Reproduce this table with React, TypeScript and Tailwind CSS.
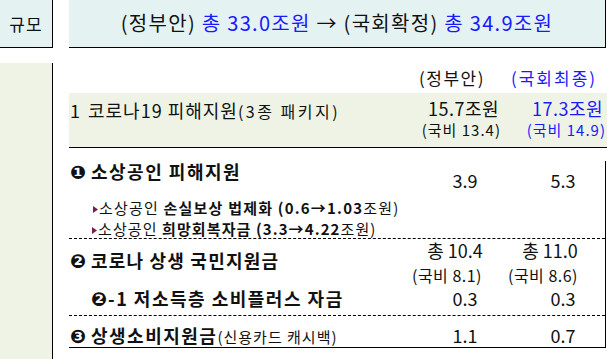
import React from "react";

const FONT = { fontFamily: '"Noto Sans CJK KR", "Noto Sans", sans-serif' };

function Bullet() {
  return (
    <svg width="5" height="7" viewBox="0 0 5 7" className="inline-block mr-[1px] align-[1px]">
      <polygon points="0,0 5,3.5 0,7" fill="#7a1f4a" />
    </svg>
  );
}

function Circ({ n, w = 21 }: { n: string; w?: number }) {
  return (
    <span
      className="inline-block text-[19px] leading-none align-[0px] tracking-normal"
      style={{ fontFamily: '"DejaVu Sans", sans-serif', width: w }}
    >
      {n}
    </span>
  );
}

export default function App() {
  return (
    <div className="w-[607px] h-[359px] bg-white text-[#111] overflow-hidden" style={FONT}>
      {/* top row */}
      <div className="flex h-[48px]">
        <div className="w-[53px] bg-[#e4f2f2] border-r border-b border-black flex items-center justify-center text-[17px] tracking-[1px]">
          규모
        </div>
        <div className="w-[16px]" />
        <div className="w-[537px] bg-[#e4f2f2] border-r border-b border-black flex items-center justify-center pb-[2px] text-[20px] tracking-[1.3px] whitespace-nowrap">
          <span>(정부안)&nbsp;</span>
          <span className="text-[#1a1aff]">총 33.0조원</span>
          <span>&nbsp;→ (국회확정)&nbsp;</span>
          <span className="text-[#1a1aff]">총 34.9조원</span>
        </div>
      </div>
      <div className="flex mt-[15px] h-[296px]">
        <div className="w-[53px] bg-[#eef3e5] border-r border-black" />
        <div className="w-[16px]" />
        <div className="w-[538px] flex flex-col">
          {/* header */}
          <div className="flex h-[30px] items-center text-[17px]">
            <div className="flex-1" />
            <div className="w-[100px] text-center pr-[10px] tracking-[1.5px]">(정부안)</div>
            <div className="w-[100px] text-center pr-[6px] tracking-[2px] text-[#1a1aff]">(국회최종)</div>
          </div>
          {/* row 1 */}
          <div className="flex h-[55px] bg-[#eef3e5] border-b border-black">
            <div className="flex-1 pt-[7px] pl-[1px] leading-[20px] text-[18px] whitespace-nowrap">
              <span className="inline-block w-[18px]">1</span>
              <span className="tracking-[1px]">코로나19 피해지원</span>
              <span className="text-[16px] tracking-[2.5px]">(3종 패키지)</span>
            </div>
            <div className="w-[100px] pt-[4px] text-right whitespace-nowrap">
              <div className="leading-[22px] text-[18px] pr-[8px] tracking-[0.5px]">15.7조원</div>
              <div className="leading-[22px] text-[15px] pr-[6px] tracking-[1px]">(국비 13.4)</div>
            </div>
            <div className="w-[100px] pt-[4px] text-right text-[#1a1aff] whitespace-nowrap">
              <div className="leading-[22px] text-[18px] pr-[4px] tracking-[0.5px]">17.3조원</div>
              <div className="leading-[22px] text-[15px] pr-[1px] tracking-[1px]">(국비 14.9)</div>
            </div>
          </div>
          {/* lower table */}
          <div className="mt-[13px] w-[537px] border-r border-b border-black flex flex-col">
            {/* block 1 */}
            <div className="flex h-[78px] border-b border-dashed border-black">
              <div className="flex-1 pl-[1px]">
                <div className="leading-[20px] text-[18px] font-bold tracking-[1.5px] whitespace-nowrap">
                  <Circ n="❶" />소상공인 피해지원
                </div>
                <div className="mt-[16px] pl-[23px] leading-[20px] text-[15px] tracking-[1.2px] whitespace-nowrap">
                  <Bullet />소상공인 <b>손실보상 법제화 (0.6→1.03</b>조원)
                </div>
                <div className="mt-[1px] pl-[22px] leading-[20px] text-[15px] tracking-[1.1px] whitespace-nowrap">
                  <Bullet />소상공인 <b>희망회복자금 (3.3→4.22</b>조원)
                </div>
              </div>
              <div className="w-[100px] pt-[9px] leading-[20px] text-[18px] text-center pl-[20px]">3.9</div>
              <div className="w-[100px] pt-[9px] leading-[20px] text-[18px] text-center pl-[16px]">5.3</div>
            </div>
            {/* block 2 */}
            <div className="flex flex-col h-[77px] border-b border-dashed border-black">
              <div className="flex h-[46px]">
                <div className="flex-1 pl-[1px] pt-[11px] leading-[20px] text-[18px] font-bold tracking-[1.2px] whitespace-nowrap">
                  <Circ n="❷" />코로나 상생 국민지원금
                </div>
                <div className="w-[100px] pt-[1px] text-center whitespace-nowrap">
                  <div className="leading-[20px] text-[18px]">총 10.4</div>
                  <div className="mt-[5px] leading-[20px] text-[16px] pr-[16px] tracking-[0.5px]">(국비 8.1)</div>
                </div>
                <div className="w-[100px] pt-[1px] text-center whitespace-nowrap">
                  <div className="leading-[20px] text-[18px] pr-[10px]">총 11.0</div>
                  <div className="mt-[5px] leading-[20px] text-[16px] pr-[24px] tracking-[0.5px]">(국비 8.6)</div>
                </div>
              </div>
              <div className="flex pt-[3px]">
                <div className="flex-1 pl-[22px] leading-[20px] text-[18px] font-bold tracking-[1.5px] whitespace-nowrap">
                  <Circ n="❷" w={17} />-1 저소득층 소비플러스 자금
                </div>
                <div className="w-[100px] leading-[20px] text-[18px] text-center pl-[20px]">0.3</div>
                <div className="w-[100px] leading-[20px] text-[18px] text-center pl-[16px]">0.3</div>
              </div>
            </div>
            {/* block 3 */}
            <div className="flex flex-1 pt-[9px]">
              <div className="flex-1 pl-[1px] leading-[20px] text-[18px] whitespace-nowrap">
                <span className="font-bold tracking-[1.5px]"><Circ n="❸" />상생소비지원금</span>
                <span className="text-[15px] tracking-[1px]">(신용카드 캐시백)</span>
              </div>
              <div className="w-[100px] leading-[20px] text-[18px] text-center pl-[20px]">1.1</div>
              <div className="w-[100px] leading-[20px] text-[18px] text-center pl-[16px]">0.7</div>
            </div>
          </div>
        </div>
      </div>
    </div>
  );
}
